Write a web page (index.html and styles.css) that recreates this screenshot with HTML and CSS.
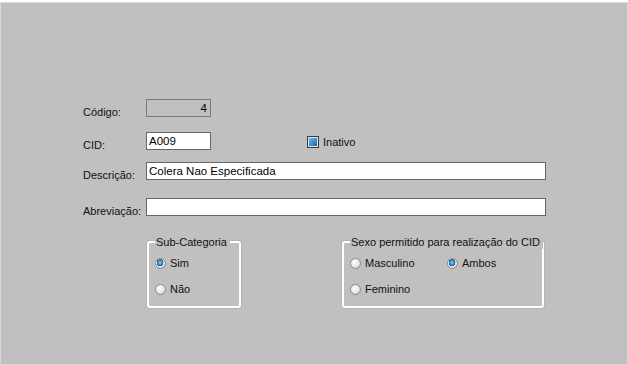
FILE: index.html
```html
<!DOCTYPE html>
<html lang="pt">
<head>
    <meta charset="UTF-8">
    <meta name="viewport" content="width=device-width, initial-scale=1.0">
    <title>Cadastro de CID</title>
    <link rel="stylesheet" href="styles.css">
</head>
<body>
    <main class="window">
        <form class="cid-form">
            <div class="row">
                <label class="label">Código:</label>
                <div class="field field-short field-readonly">4</div>
            </div>
            <div class="row row-cid">
                <label class="label">CID:</label>
                <div class="field field-short">A009</div>
                <span class="check">
                    <span class="check-box"></span>
                    <span class="check-text">Inativo</span>
                </span>
            </div>
            <div class="row row-desc">
                <label class="label">Descrição:</label>
                <div class="field field-long">Colera Nao Especificada</div>
            </div>
            <div class="row row-abrev">
                <label class="label">Abreviação:</label>
                <div class="field field-long"></div>
            </div>
            <div class="groups">
                <fieldset class="group group-sub">
                    <legend>Sub-Categoria</legend>
                    <div class="radio-row">
                        <span class="radio checked"></span><span class="radio-text">Sim</span>
                    </div>
                    <div class="radio-row">
                        <span class="radio"></span><span class="radio-text">Não</span>
                    </div>
                </fieldset>
                <fieldset class="group group-sexo">
                    <legend>Sexo permitido para realização do CID</legend>
                    <div class="radio-grid">
                        <div class="radio-row">
                            <span class="radio"></span><span class="radio-text">Masculino</span>
                        </div>
                        <div class="radio-row">
                            <span class="radio checked"></span><span class="radio-text">Ambos</span>
                        </div>
                        <div class="radio-row">
                            <span class="radio"></span><span class="radio-text">Feminino</span>
                        </div>
                    </div>
                </fieldset>
            </div>
        </form>
    </main>
</body>
</html>
```
FILE: styles.css
```css
html{
    box-sizing: border-box;
    font-family: "Liberation Sans", Arial, sans-serif;
    font-size: 11px;
    color: #111;
}
*,
*::after,
*::before{
    box-sizing: inherit;
}
body{
    margin: 0;
    background-color: #c0c0c0;
    border-top: 2px solid #fff;
}
.window{
    height: 363px;
    border: 1px solid #d6d6d6;
    border-top-color: #dcdcdc;
}
.cid-form{
    padding: 96px 0 0 82px;
}
.row{
    display: flex;
    align-items: flex-start;
    height: 18px;
}
.row-cid{
    margin-top: 15px;
}
.row-desc{
    margin-top: 12px;
}
.row-abrev{
    margin-top: 18px;
}
.label{
    width: 63px;
    height: 18px;
    padding-top: 7px;
    line-height: 13px;
}
.field{
    height: 18px;
    border: 1px solid #666;
    background-color: #fff;
    padding: 0 2px;
    line-height: 16px;
    font-size: 11.5px;
    color: #000;
}
.field-short{
    width: 65px;
}
.field-long{
    width: 400px;
}
.field-readonly{
    background-color: #c0c0c0;
    border-color: #7a7a7a;
    text-align: right;
    padding-right: 3px;
}
.check{
    display: flex;
    align-items: center;
    margin-left: 96px;
    height: 18px;
    padding-top: 2px;
}
.check-box{
    width: 12px;
    height: 12px;
    border: 1px solid #3a3a3a;
    background: linear-gradient(135deg, #7cc0ea 0%, #3a8ccb 55%, #1d5f96 100%);
    box-shadow: inset 0 0 0 1px #d8ecf8;
}
.check-text{
    margin-left: 4px;
    line-height: 13px;
}
.groups{
    display: flex;
    align-items: flex-start;
    gap: 101px;
    margin-top: 19px;
    padding-left: 64px;
}
.group{
    margin: 0;
    padding: 5px 0 8px 6px;
    border: 2px solid #fff;
    border-radius: 3px;
    box-shadow: 0 0 0 1px #b4b4b4;
    min-width: 0;
}
.group legend{
    padding: 0 3px 0 1px;
    line-height: 14px;
    white-space: nowrap;
}
.group-sub{
    width: 94px;
}
.group-sexo{
    width: 202px;
}
.radio-grid{
    display: grid;
    grid-template-columns: 97px auto;
}
.radio-row{
    display: flex;
    align-items: center;
    height: 18px;
    margin-bottom: 8px;
}
.radio-row:last-child,
.radio-grid .radio-row:nth-child(3){
    margin-bottom: 0;
}
.radio{
    width: 11px;
    height: 11px;
    border-radius: 50%;
    border: 1px solid #8c8c8c;
    background: radial-gradient(circle at 40% 35%, #fff 0%, #e6e6e6 55%, #bdbdbd 100%);
    flex: none;
}
.radio.checked{
    background:
        radial-gradient(circle at 45% 40%, #8fd0f5 0%, #2f86c8 32%, #174f86 46%, transparent 48%),
        radial-gradient(circle at 40% 35%, #fff 0%, #e6e6e6 55%, #bdbdbd 100%);
}
.radio-text{
    margin-left: 4px;
    line-height: 13px;
}
```
